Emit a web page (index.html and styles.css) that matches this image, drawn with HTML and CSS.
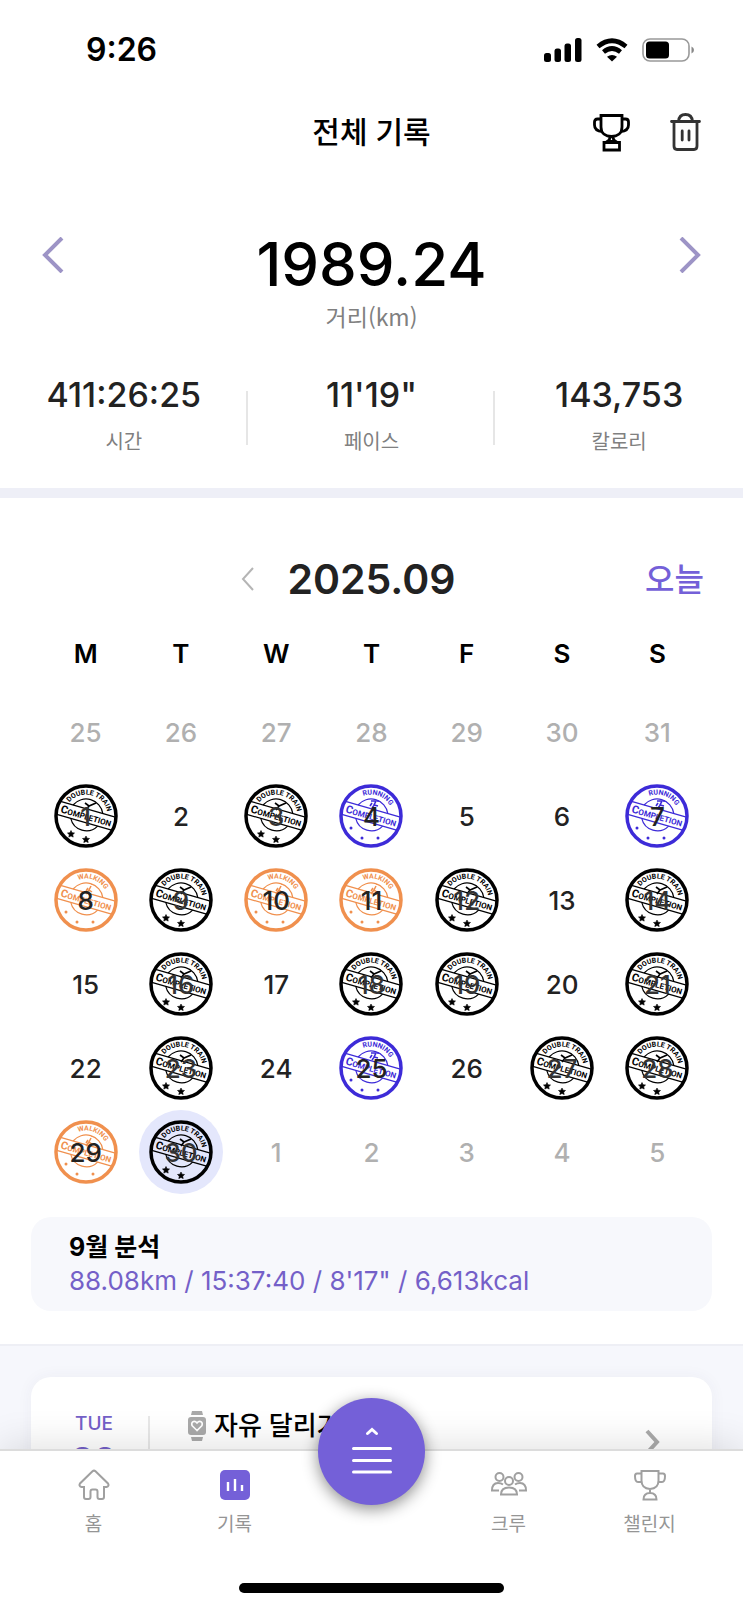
FILE: index.html
```html
<!DOCTYPE html>
<html lang="ko">
<head>
  <meta charset="UTF-8">
  <meta name="viewport" content="width=device-width, initial-scale=1">
  <title>전체 기록</title>
  <link rel="stylesheet" href="styles.css">
</head>
<body>

  <!-- stamp shapes used in the calendar -->
  <svg class="defs" width="0" height="0" aria-hidden="true">
    <defs>
      <path id="arc" d="M10.500 32a21.500 21.500 0 0 1 43 0"/>
      <g id="base" fill="none" stroke="currentColor">
        <circle cx="32" cy="32" r="30" stroke-width="3.500"/>
        <path d="M16.500 25A17 17 0 0 1 47.500 25M18 38.500A16 16 0 0 0 46 38.500" stroke-width="1.200" transform="rotate(16 32 32)"/>
        <path d="M3.500 25H60.500M3.500 38.500H60.500" stroke-width="1.200" transform="rotate(16 32 32)"/>
      </g>
      <g id="band">
        <text x="32" y="35.500" class="band-text" transform="rotate(16 32 32)"><tspan class="band-cap">C</tspan>OMPLETION</text>
      </g>
      <g id="dots" fill="currentColor">
        <circle cx="12" cy="44" r="1.500"/>
        <circle cx="23" cy="54" r="1.500"/>
        <circle cx="39" cy="54" r="1.500"/>
      </g>
      <symbol id="double" viewBox="0 0 64 64">
        <use href="#base"/>
        <use href="#band"/>
        <text class="arc-text" transform="rotate(14 32 32)"><textPath href="#arc" startOffset="50%">DOUBLE TRAIN</textPath></text>
        <path d="M17 46.500l1 2.200 2.500.3-1.800 1.700.5 2.400-2.200-1.200-2.200 1.200.5-2.400-1.800-1.700 2.500-.3zM32 52l1 2.200 2.500.3-1.800 1.700.5 2.400-2.200-1.200-2.200 1.200.5-2.400-1.800-1.700 2.500-.3z" fill="currentColor" stroke="currentColor" stroke-width=".6"/>
        <path d="M31 19l4 3 7-3M35 22l-3 4" fill="none" stroke="currentColor" stroke-width="1.600"/>
      </symbol>
      <symbol id="running" viewBox="0 0 64 64">
        <use href="#base"/>
        <use href="#band"/>
        <use href="#dots"/>
        <text class="arc-text" transform="rotate(20 32 32)"><textPath href="#arc" startOffset="50%">RUNNING</textPath></text>
        <path d="M32 17h5l-2 4 4 1M33 19l-2 3M36 20l-3 4M38 17h2" fill="none" stroke="currentColor" stroke-width="1.600"/>
      </symbol>
      <symbol id="walking" viewBox="0 0 64 64">
        <use href="#base"/>
        <use href="#band"/>
        <use href="#dots"/>
        <text class="arc-text" transform="rotate(20 32 32)"><textPath href="#arc" startOffset="50%">WALKING</textPath></text>
        <path d="M37 18l-2 4 3 2M34 20l-2 3M35 22l-3 4M38 16v1" fill="none" stroke="currentColor" stroke-width="1.500"/>
      </symbol>
    </defs>
  </svg>

  <main class="screen">
    <div class="status-bar">
      <span class="clock">9:26</span>
      <div class="status-icons">
        <svg width="38" height="24" viewBox="0 0 38 24"><rect y="15" width="7" height="9" rx="2.500"/><rect x="10.500" y="10.500" width="6.500" height="13.500" rx="2.500"/><rect x="20.500" y="5.500" width="6.500" height="18.500" rx="2.500"/><rect x="31" width="6.500" height="24" rx="2.500"/></svg>
        <svg width="32" height="24" viewBox="0 0 32 24" fill="none" stroke="#000" stroke-width="4.600"><path d="M2 8.500Q16-3 30 8.500"/><path d="M7.500 14q8.500-7 17 0"/><path d="M16 23.500l-5-4.700q5-3.500 10 0z" fill="#000" stroke="none"/></svg>
        <svg width="53" height="24" viewBox="0 0 53 24"><rect x="1" y="1" width="46" height="22" rx="7" fill="#fff" stroke="#999" stroke-width="1.600"/><rect x="4" y="3.500" width="23" height="17" rx="3.500"/><path d="M49.500 8.500q2.500 1 2.500 3.500t-2.500 3.500z" fill="#888"/></svg>
      </div>
    </div>

    <header class="header">
      <h1>전체 기록</h1>
      <div class="header-actions">
        <button class="icon-btn" type="button" aria-label="트로피">
          <svg width="40" height="40" viewBox="0 0 40 40" fill="none" stroke="#000" stroke-width="2.800"><path d="M9 3.500h21V15c0 6.500-5 9.500-10.500 9.500S9 21.500 9 15z"/><path d="M9 7H5.500Q2.500 7 2.500 10v3q0 6 8 6.500M30 7h3.500q3 0 3 3v3q0 6-8 6.500M18 24.500c0 3-2 5-4 5.500M21 24.500c0 3 2 5 4 5.500M15.500 29.500h8M12 30.500h15.500v7.500H12z"/></svg>
        </button>
        <button class="icon-btn" type="button" aria-label="삭제">
          <svg width="40" height="40" viewBox="0 0 40 40" fill="none" stroke="#333" stroke-width="2.800" stroke-linecap="round"><path d="M6.500 9.500h28M13.500 9.500q.5-7 7-7t7 7M9 10v24q0 3.500 3 3.500h17q3 0 3-3.500V10M17.200 19v9M24 19v9"/></svg>
        </button>
      </div>
    </header>

    <section class="summary">
      <div class="total">
        <button class="arrow" type="button" aria-label="이전"><svg width="24" height="36" viewBox="0 0 24 36"><path d="M21 1L4 18l17 17"/></svg></button>
        <div class="total-value">1989.24</div>
        <button class="arrow" type="button" aria-label="다음"><svg width="24" height="36" viewBox="0 0 24 36"><path d="M3 1l17 17L3 35"/></svg></button>
      </div>
      <p class="total-label">거리(km)</p>
      <dl class="stats">
        <div class="stat"><dd>411:26:25</dd><dt>시간</dt></div>
        <div class="stat"><dd>11'19"</dd><dt>페이스</dt></div>
        <div class="stat"><dd>143,753</dd><dt>칼로리</dt></div>
      </dl>
    </section>

    <section class="calendar">
      <div class="month-bar">
        <button class="prev-month" type="button" aria-label="이전 달"><svg width="14" height="24" viewBox="0 0 14 24"><path d="M12 1L2 12l10 11"/></svg></button>
        <h2>2025.09</h2>
        <button class="today" type="button">오늘</button>
      </div>

      <table class="days">
        <thead>
          <tr><th>M</th><th>T</th><th>W</th><th>T</th><th>F</th><th>S</th><th>S</th></tr>
        </thead>
        <tbody>
          <tr class="other">
            <td><button type="button">25</button></td>
            <td><button type="button">26</button></td>
            <td><button type="button">27</button></td>
            <td><button type="button">28</button></td>
            <td><button type="button">29</button></td>
            <td><button type="button">30</button></td>
            <td><button type="button">31</button></td>
          </tr>
          <tr>
            <td><button type="button"><svg class="stamp double"><use href="#double"/></svg><span>1</span></button></td>
            <td><button type="button">2</button></td>
            <td><button type="button"><svg class="stamp double"><use href="#double"/></svg><span>3</span></button></td>
            <td><button type="button"><svg class="stamp running"><use href="#running"/></svg><span>4</span></button></td>
            <td><button type="button">5</button></td>
            <td><button type="button">6</button></td>
            <td><button type="button"><svg class="stamp running"><use href="#running"/></svg><span>7</span></button></td>
          </tr>
          <tr>
            <td><button type="button"><svg class="stamp walking"><use href="#walking"/></svg><span>8</span></button></td>
            <td><button type="button"><svg class="stamp double"><use href="#double"/></svg><span>9</span></button></td>
            <td><button type="button"><svg class="stamp walking"><use href="#walking"/></svg><span>10</span></button></td>
            <td><button type="button"><svg class="stamp walking"><use href="#walking"/></svg><span>11</span></button></td>
            <td><button type="button"><svg class="stamp double"><use href="#double"/></svg><span>12</span></button></td>
            <td><button type="button">13</button></td>
            <td><button type="button"><svg class="stamp double"><use href="#double"/></svg><span>14</span></button></td>
          </tr>
          <tr>
            <td><button type="button">15</button></td>
            <td><button type="button"><svg class="stamp double"><use href="#double"/></svg><span>16</span></button></td>
            <td><button type="button">17</button></td>
            <td><button type="button"><svg class="stamp double"><use href="#double"/></svg><span>18</span></button></td>
            <td><button type="button"><svg class="stamp double"><use href="#double"/></svg><span>19</span></button></td>
            <td><button type="button">20</button></td>
            <td><button type="button"><svg class="stamp double"><use href="#double"/></svg><span>21</span></button></td>
          </tr>
          <tr>
            <td><button type="button">22</button></td>
            <td><button type="button"><svg class="stamp double"><use href="#double"/></svg><span>23</span></button></td>
            <td><button type="button">24</button></td>
            <td><button type="button"><svg class="stamp running"><use href="#running"/></svg><span>25</span></button></td>
            <td><button type="button">26</button></td>
            <td><button type="button"><svg class="stamp double"><use href="#double"/></svg><span>27</span></button></td>
            <td><button type="button"><svg class="stamp double"><use href="#double"/></svg><span>28</span></button></td>
          </tr>
          <tr>
            <td><button type="button"><svg class="stamp walking"><use href="#walking"/></svg><span>29</span></button></td>
            <td><button type="button" class="selected"><svg class="stamp double"><use href="#double"/></svg><span>30</span></button></td>
            <td class="other"><button type="button">1</button></td>
            <td class="other"><button type="button">2</button></td>
            <td class="other"><button type="button">3</button></td>
            <td class="other"><button type="button">4</button></td>
            <td class="other"><button type="button">5</button></td>
          </tr>
        </tbody>
      </table>

      <div class="analysis">
        <h3>9월 분석</h3>
        <p>88.08km / 15:37:40 / 8'17" / 6,613kcal</p>
      </div>
    </section>

    <section class="feed">
      <a class="record" href="#">
        <div class="record-date"><span>TUE</span><strong>30</strong></div>
        <div class="record-title">
          <svg width="18" height="30" viewBox="0 0 18 30" fill="#aaa"><path d="M4 0h10l1 4H3zM3 26h12l-1 4H4z"/><rect y="6" width="18" height="18" rx="3"/><path d="M9 19.500l-5-5q-1-3 1.500-4 2-.5 3.500 1.500 1.500-2 3.500-1.500 2.500 1 1.500 4z" fill="none" stroke="#fff" stroke-width="1.600"/></svg>
          자유 달리기
        </div>
        <svg class="record-arrow" width="16" height="26" viewBox="0 0 16 26"><path d="M3 2l10 11L3 24"/></svg>
      </a>
    </section>
  </main>

  <nav class="tabs">
    <div class="tab-list">
      <a class="tab" href="#">
        <svg width="32" height="32" viewBox="0 0 32 32"><path d="M14.500 2.300q1.500-1.300 3 0L30 14.500q1.500 2.500-1.500 3.500H26v10q0 2-2 2h-2.500q-2 0-2-2v-5.500q0-2-2-2h-3q-2 0-2 2V28q0 2-2 2H8q-2 0-2-2V18H3.500Q.5 17 2 14.500z"/></svg>
        <span>홈</span>
      </a>
      <a class="tab active" href="#">
        <svg width="32" height="32" viewBox="0 0 32 32"><rect x="1" y="1" width="30" height="30" rx="5" fill="#7460d8" stroke="none"/><path d="M9 13v9M16 10v12M23 16v6" stroke="#fff" stroke-width="2.400"/></svg>
        <span>기록</span>
      </a>
      <button class="fab" type="button" aria-label="메뉴">
        <svg width="40" height="50" viewBox="0 0 40 50" fill="none" stroke="#fff" stroke-width="3" stroke-linecap="round"><path d="M15.500 6.500L20 2.500l4.500 4M1.500 21.500h37M1.500 33.500h37M1.500 45h37"/></svg>
      </button>
      <a class="tab" href="#">
        <svg width="36" height="32" viewBox="0 0 36 32"><circle cx="8.500" cy="8" r="4"/><circle cx="27.500" cy="8" r="4"/><circle cx="18" cy="12" r="4"/><path d="M10 25.500q0-7 8-7t8 7H10zM8 21.500H1q0-7.500 6-7.500 3 0 5 1.500M28 21.500h7q0-7.500-6-7.500-3 0-5 1.500"/></svg>
        <span>크루</span>
      </a>
      <a class="tab" href="#">
        <svg width="32" height="32" viewBox="0 0 32 32"><path d="M7.500 2h17v9.500q0 8-8.500 8.500-8.500-.5-8.500-8.500zM7.500 4.500H3q-2 0-2 2.500 0 6 3 6h4M24.500 4.500H29q2 0 2 2.500 0 6-3 6h-4M16 20v4M9.500 30.500q0-6.500 6.500-6.500t6.500 6.500z"/></svg>
        <span>챌린지</span>
      </a>
    </div>
    <div class="home-indicator"></div>
  </nav>

</body>
</html>
```

FILE: styles.css
```css
* {
  box-sizing: border-box;
  margin: 0;
  padding: 0;
}

body {
  display: flex;
  flex-direction: column;
  height: 100vh;
  background: #fff;
  color: #000;
  font-family: Inter, "Noto Sans CJK KR", sans-serif;
}

button {
  background: none;
  border: none;
  color: inherit;
  font: inherit;
  cursor: pointer;
}

a {
  color: inherit;
  text-decoration: none;
}

svg {
  display: block;
}

.defs {
  position: absolute;
}

.screen {
  display: flex;
  flex-direction: column;
  flex: 1;
  min-height: 0;
  overflow-y: auto;
  scrollbar-width: none;
}

.screen > * {
  flex-shrink: 0;
}

/* status bar */
.status-bar {
  display: flex;
  justify-content: space-between;
  align-items: center;
  height: 99px;
  padding: 0 48px 0 86px;
}

.clock {
  font-size: 32px;
  font-weight: 600;
}

.status-icons {
  display: flex;
  gap: 14px;
}

/* header */
.header {
  display: grid;
  grid-template-columns: 1fr auto 1fr;
  align-items: center;
  height: 65px;
  padding: 0 38px;
}

.header h1 {
  grid-column: 2;
  padding-bottom: 4px;
  font-size: 30px;
  font-weight: 500;
}

.header-actions {
  display: flex;
  justify-content: flex-end;
  gap: 33px;
}

/* totals */
.summary {
  padding: 70px 0 32px;
  border-bottom: 10px solid #eeeff7;
}

.total {
  display: flex;
  justify-content: space-between;
  align-items: flex-start;
  padding: 0 41px;
}

.arrow {
  padding: 3px 0;
}

.arrow path {
  fill: none;
  stroke: #9d94c6;
  stroke-width: 4;
}

.total-value {
  font-size: 60px;
  font-weight: 500;
  line-height: 60px;
}

.total-label {
  margin-top: 6px;
  color: #808080;
  font-size: 23px;
  line-height: 32px;
  text-align: center;
  font-family: "Noto Sans CJK KR", sans-serif;
}

.stats {
  display: grid;
  grid-template-columns: repeat(3, 1fr);
  margin-top: 43px;
}

.stat {
  display: flex;
  flex-direction: column;
  align-items: center;
  gap: 13px;
  background: linear-gradient(#e6e6e6, #e6e6e6) right 16px / 2px 54px no-repeat;
}

.stat:last-child {
  background: none;
}

.stat dd {
  color: #222;
  font-size: 34px;
  font-weight: 500;
  line-height: 40px;
}

.stat dt {
  color: #808080;
  font-size: 20px;
  line-height: 28px;
}

/* calendar */
.calendar {
  padding: 56px 31px 33px;
}

.month-bar {
  display: grid;
  grid-template-columns: 1fr auto 1fr;
  align-items: center;
  height: 48px;
  padding: 0 8px;
}

.month-bar h2 {
  color: #222;
  font-size: 41px;
  font-weight: 600;
}

.prev-month {
  justify-self: end;
  margin-right: 32px;
}

.prev-month path {
  fill: none;
  stroke: #b5b5b5;
  stroke-width: 2;
}

.today {
  justify-self: end;
  padding-bottom: 4px;
  color: #7460d8;
  font-size: 32px;
  font-weight: 500;
}

.days {
  width: 100%;
  margin-top: 15px;
  padding: 0 7px;
  border-spacing: 0;
  table-layout: fixed;
}

.days th {
  height: 73px;
  font-size: 26px;
  font-weight: 600;
}

.days td {
  height: 84px;
}

.days td button {
  display: flex;
  justify-content: center;
  align-items: center;
  position: relative;
  width: 84px;
  height: 84px;
  margin: 0 auto;
  border-radius: 50%;
  color: #222;
  font-size: 26px;
  font-weight: 500;
}

.days .other button {
  color: #b0b0b0;
}

.days td .selected {
  background: #e4e7fc;
}

.days button span {
  position: relative;
}

.stamp {
  position: absolute;
  top: 10px;
  left: 10px;
  width: 64px;
  height: 64px;
}

.double {
  color: #000;
}

.double + span {
  color: #333;
}

.running {
  color: #3d2bd8;
}

.walking {
  color: #f0904e;
}

.arc-text,
.band-text {
  fill: currentColor;
  font-family: Roboto, sans-serif;
  font-weight: 700;
  text-anchor: middle;
}

.arc-text {
  font-size: 7px;
}

.band-text {
  font-size: 8px;
}

.band-cap {
  font-size: 11px;
}

.analysis {
  margin-top: 23px;
  padding: 14px 38px;
  border-radius: 20px;
  background: #f7f8fc;
  font-size: 26px;
  line-height: 33px;
}

.analysis h3 {
  font-size: 25px;
  font-weight: 700;
}

.analysis p {
  color: #7460c8;
}

/* records */
.feed {
  padding: 31px;
  border-top: 2px solid #eeeff5;
  background: #f6f7fc;
}

.record {
  display: flex;
  align-items: flex-start;
  height: 154px;
  border-radius: 20px;
  background: #fff;
  box-shadow: 0 0 16px rgba(60, 60, 100, 0.05);
  padding: 31px 52px 31px 31px;
}

.record-date {
  display: flex;
  flex-direction: column;
  align-items: center;
  width: 88px;
  height: 92px;
  padding-right: 22px;
  margin-top: 8px;
  border-right: 2px solid #e8e8e8;
  color: #7460c8;
}

.record-date span {
  font-size: 19px;
  font-weight: 500;
  line-height: 16px;
}

.record-date strong {
  margin-top: 4px;
  font-size: 34px;
  line-height: 48px;
}

.record-title {
  display: flex;
  align-items: center;
  gap: 8px;
  flex: 1;
  padding-left: 38px;
  font-size: 26px;
  font-weight: 500;
  line-height: 36px;
}

.record-arrow {
  margin-top: 21px;
}

.record-arrow path {
  fill: none;
  stroke: #aaa;
  stroke-width: 4;
}

/* bottom tabs */
.tabs {
  position: relative;
  border-top: 2px solid #dcdcdc;
  background: #fff;
  box-shadow: 0 -4px 36px rgba(0, 0, 0, 0.12);
}

.tab-list {
  display: grid;
  grid-template-columns: repeat(2, 1fr) 133px repeat(2, 1fr);
  padding: 18px 23px 0;
}

.tab {
  display: flex;
  flex-direction: column;
  align-items: center;
  gap: 10px;
  color: #959595;
  font-size: 19px;
  line-height: 28px;
}

.tab svg {
  fill: none;
  stroke: #a0a0a0;
  stroke-width: 2;
}

.fab {
  display: flex;
  justify-content: center;
  align-items: center;
  justify-self: center;
  width: 107px;
  height: 107px;
  margin: -71px 0 -36px;
  border-radius: 50%;
  background: #7460d8;
  box-shadow: 0 4px 16px rgba(0, 0, 0, 0.45);
}

.home-indicator {
  width: 265px;
  height: 10px;
  margin: 44px auto 15px;
  border-radius: 5px;
  background: #000;
}
```
